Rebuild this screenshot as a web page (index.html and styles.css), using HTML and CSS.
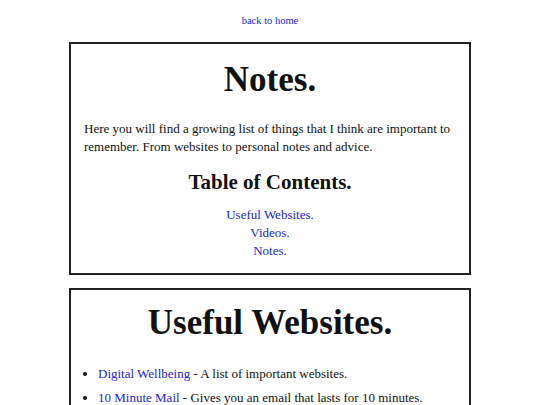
FILE: index.html
```html
<!DOCTYPE html>
<html>
<head>
<meta charset="utf-8">
<title>Notes.</title>
<link rel="stylesheet" href="styles.css">
</head>
<body>
<div class="page">
  <nav class="top"><a href="#">back to home</a></nav>
  <section class="card">
    <h1 class="title">Notes.</h1>
    <p class="intro">Here you will find a growing list of things that I think are important to remember. From websites to personal notes and advice.</p>
    <h2 class="subtitle">Table of Contents.</h2>
    <div class="toc">
      <a href="#web">Useful Websites.</a>
      <a href="#videos">Videos.</a>
      <a href="#notes">Notes.</a>
    </div>
  </section>
  <section class="card" id="web">
    <h1 class="title title-web">Useful Websites.</h1>
    <ul class="list">
      <li><a href="#">Digital Wellbeing</a> - A list of important websites.</li>
      <li><a href="#">10 Minute Mail</a> - Gives you an email that lasts for 10 minutes.</li>
      <li><a href="#">Temp Number</a> - A temporary phone number.</li>
    </ul>
  </section>
</div>
</body>
</html>
```
FILE: styles.css
```css
html, body {
  margin: 0;
  padding: 0;
  background: #fff;
}
body {
  font-family: "Liberation Serif", Georgia, serif;
  color: #111;
}
a {
  color: #2323cc;
  text-decoration: none;
}
.page {
  width: 402px;
  margin: 0 auto;
  display: flex;
  flex-direction: column;
}
.top {
  text-align: center;
  font-size: 10.5px;
  padding-top: 15px;
  height: 27px;
}
.card {
  border: 2px solid #222;
  padding: 0 13px 13px;
  margin-bottom: 13px;
}
.title {
  text-align: center;
  font-size: 35px;
  font-weight: bold;
  margin: 18px 0 0;
  line-height: 36px;
}
.title-web {
  margin-top: 15px;
}
.intro {
  font-size: 13px;
  line-height: 18px;
  margin: 22px 0 0;
}
.subtitle {
  text-align: center;
  font-size: 21px;
  margin: 14px 0 0;
  line-height: 24px;
}
.toc {
  display: flex;
  flex-direction: column;
  align-items: center;
  font-size: 13px;
  line-height: 18px;
  margin-top: 12px;
}
.list {
  margin: 24px 0 0;
  padding-left: 14px;
  font-size: 13px;
  line-height: 18px;
}
.list li {
  margin-bottom: 6px;
}
```
